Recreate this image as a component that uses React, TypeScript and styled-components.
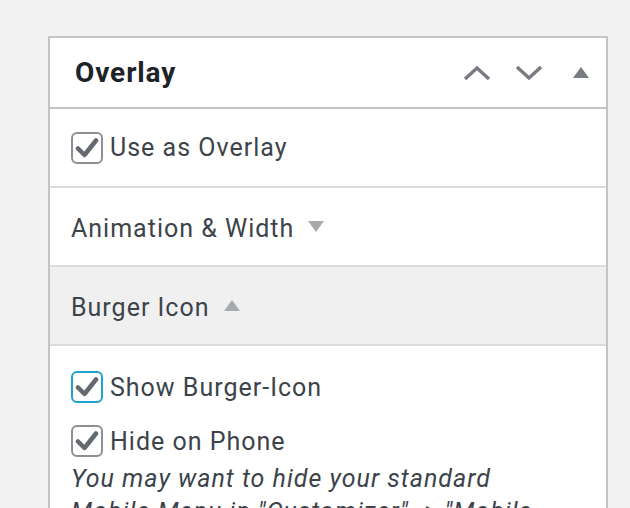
import React from 'react';
import styled, { createGlobalStyle } from 'styled-components';

const GlobalStyle = createGlobalStyle`
  html, body {
    margin: 0;
    padding: 0;
    background: #f2f2f2;
    font-family: Roboto, "Liberation Sans", sans-serif;
    overflow: hidden;
  }
`;

const Page = styled.div`
  width: 630px;
  height: 508px;
  padding: 36px 0 0 48px;
  box-sizing: border-box;
  overflow: hidden;
`;

const Panel = styled.div`
  width: 560px;
  background: #fff;
  border: 2px solid #c3c4c7;
  border-bottom: none;
  box-sizing: border-box;
`;

const Header = styled.div`
  height: 69px;
  display: flex;
  align-items: center;
  padding: 0 17px 0 25px;
  border-bottom: 2px solid #c3c4c7;
`;

const Title = styled.h2`
  margin: 0;
  flex: 1;
  font-size: 28px;
  font-weight: 700;
  letter-spacing: 0.9px;
  color: #1d2327;
`;

const Tools = styled.div`
  display: flex;
  align-items: center;
  gap: 24px;

  & > span {
    margin-left: 6px;
  }
`;

const Row = styled.div<{ $shaded?: boolean }>`
  height: 77px;
  box-sizing: content-box;
  display: flex;
  align-items: center;
  padding: 0 21px;
  border-bottom: 2px solid #dcdcde;
  background: ${(p) => (p.$shaded ? '#f0f0f1' : '#fff')};
  font-size: 25px;
  letter-spacing: 1px;
  color: #3c434a;
  gap: 14px;
`;

const RowText = styled.span`
  padding-top: 3px;
`;

const Body = styled.div`
  padding: 25px 21px 0;
  display: flex;
  flex-direction: column;
  gap: 22px;
  color: #3c434a;
  font-size: 25px;
  letter-spacing: 1px;
`;

const CheckLabel = styled.label`
  display: flex;
  align-items: center;
  gap: 7px;
`;

const Box = styled.span<{ $focus?: boolean }>`
  width: 32px;
  height: 32px;
  box-sizing: border-box;
  border: 2px solid ${(p) => (p.$focus ? '#1fa3cc' : '#8c8f94')};
  border-radius: 6px;
  display: flex;
  align-items: center;
  justify-content: center;
  flex-shrink: 0;
`;

const Note = styled.p`
  margin: -17px 0 0;
  max-width: 480px;
  font-style: italic;
  line-height: 33px;
`;

const Tri = styled.span<{ $up?: boolean; $dark?: boolean }>`
  width: 0;
  height: 0;
  border-left: 8px solid transparent;
  border-right: 8px solid transparent;
  ${(p) =>
    p.$up
      ? `border-bottom: 11px solid ${p.$dark ? '#787c82' : '#a7aaad'};`
      : `border-top: 11px solid ${p.$dark ? '#787c82' : '#a7aaad'};`}
`;

const Check = () => (
  <svg width="24" height="22" viewBox="0 0 24 22">
    <path d="M3 11.5 L9.5 18 L21 3.5" fill="none" stroke="#646970" strokeWidth="4.5" strokeLinecap="round" strokeLinejoin="round" />
  </svg>
);

const Chevron = ({ up }: { up?: boolean }) => (
  <svg width="28" height="18" viewBox="0 0 28 18">
    <path
      d={up ? 'M2 15 L14 4 L26 15' : 'M2 3 L14 14 L26 3'}
      fill="none"
      stroke="#787c82"
      strokeWidth="3.5"
    />
  </svg>
);

const Checkbox = ({ label, focus }: { label: string; focus?: boolean }) => (
  <CheckLabel>
    <Box $focus={focus}>
      <Check />
    </Box>
    {label}
  </CheckLabel>
);

export default function App() {
  return (
    <Page>
      <GlobalStyle />
      <Panel>
        <Header>
          <Title>Overlay</Title>
          <Tools>
            <Chevron up />
            <Chevron />
            <Tri $up $dark />
          </Tools>
        </Header>
        <Row>
          <Checkbox label="Use as Overlay" />
        </Row>
        <Row>
          <RowText>Animation &amp; Width</RowText> <Tri />
        </Row>
        <Row $shaded>
          <RowText>Burger Icon</RowText> <Tri $up />
        </Row>
        <Body>
          <Checkbox label="Show Burger-Icon" focus />
          <Checkbox label="Hide on Phone" />
          <Note>
            You may want to hide your standard Mobile Menu in "Customizer" -&gt; "Mobile Menu"
          </Note>
        </Body>
      </Panel>
    </Page>
  );
}
